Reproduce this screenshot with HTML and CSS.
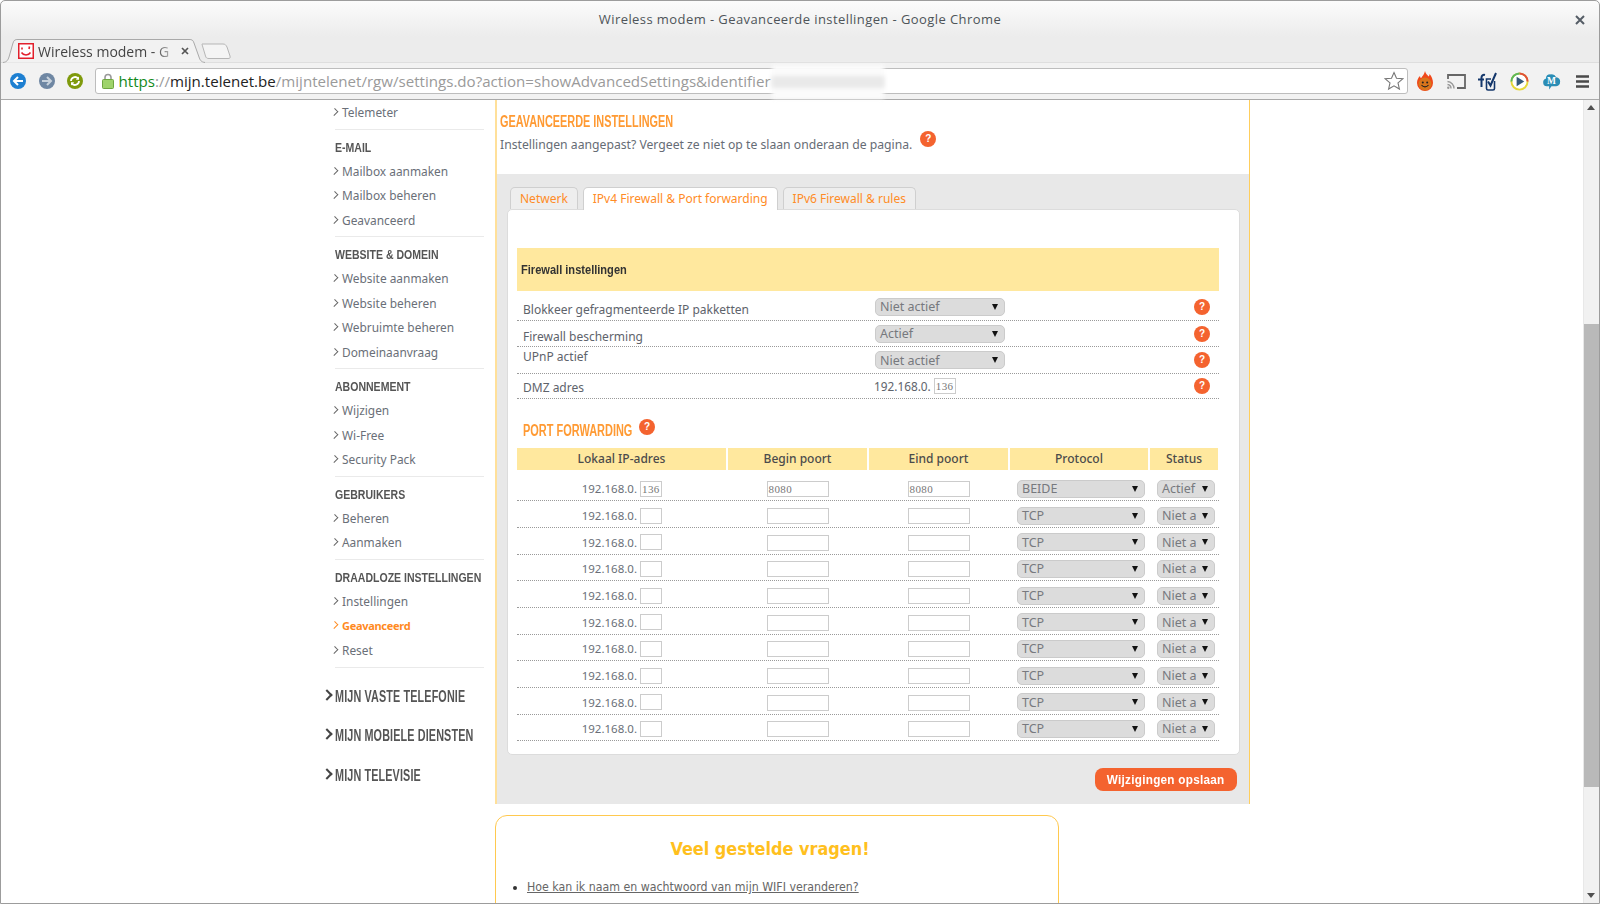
FILE: index.html
```html
<!DOCTYPE html>
<html lang="nl">
<head>
<meta charset="utf-8">
<title>Wireless modem - Geavanceerde instellingen</title>
<link rel="stylesheet" href="styles.css">
</head>
<body>
<div class="window">
  <header class="titlebar">
    <div class="title">Wireless modem - Geavanceerde instellingen - Google Chrome</div>
    <svg class="win-close" width="10" height="10" viewBox="0 0 10 10"><path d="M1 1l8 8M9 1L1 9" stroke="#555d66" stroke-width="2"/></svg>
  </header>
  <div class="tabstrip">
    <div class="btab">
      <svg class="btab-shape" width="202" height="24" viewBox="0 0 202 24"><path d="M0 23.500C4 23 5 21 6 18L10 4C11 1 12 .5 15 .5H186C189 .5 190 1 191 4L196 18C197 21 198 23 202 23.500" fill="#f2f2f2" stroke="#a9a9a9"/></svg>
      <svg class="favicon" width="16" height="16" viewBox="0 0 16 16"><rect x=".75" y=".75" width="14.500" height="14.500" fill="#fff" stroke="#e2202c" stroke-width="1.500"/><path d="M4 4.500v2M11.500 3.500l-.5 2.500" stroke="#e2202c" stroke-width="1.600"/><path d="M3.500 9.500c2 3.200 7 3.200 9 0" fill="none" stroke="#e2202c" stroke-width="1.500"/></svg>
      <span class="btab-text">Wireless modem - G</span>
      <svg class="btab-close" width="8" height="8" viewBox="0 0 8 8"><path d="M1 1l6 6M7 1L1 7" stroke="#555" stroke-width="1.700"/></svg>
    </div>
    <svg class="newtab" width="30" height="16" viewBox="0 0 30 16"><path d="M1 1H22C24 1 25 2 26 4L29 13C29.500 15 29 15.500 27 15.500H8C6 15.500 5 15 4.500 13L1.500 3C1 1.500 1 1 1 1Z" fill="#f4f4f4" stroke="#b5b5b5"/></svg>
  </div>
  <div class="toolbar">
    <svg class="navbtn" width="18" height="18" viewBox="0 0 18 18"><circle cx="9" cy="9" r="8" fill="#1d7fd1"/><path d="M14 9H5.500M9 5L5 9l4 4" fill="none" stroke="#fff" stroke-width="2"/></svg>
    <svg class="navbtn" width="18" height="18" viewBox="0 0 18 18"><circle cx="9" cy="9" r="8" fill="#6f87a3"/><path d="M4 9h8.500M9 5l4 4-4 4" fill="none" stroke="#c8d2dc" stroke-width="2"/></svg>
    <svg class="navbtn" width="18" height="18" viewBox="0 0 18 18"><circle cx="9" cy="9" r="8" fill="#7f9a0c"/><path d="M13 9a4 4 0 0 1-7 2.600M5 9a4 4 0 0 1 7-2.600" fill="none" stroke="#fff" stroke-width="1.800"/><path d="M13 4.500v3.200h-3.200zM5 13.500v-3.200h3.200z" fill="#fff"/></svg>
    <div class="omnibox">
      <svg class="lock" width="12" height="16" viewBox="0 0 12 16"><path d="M3 7V4.500a3 3 0 0 1 6 0V7" fill="none" stroke="#9a9a9a" stroke-width="1.600"/><rect x=".5" y="6.500" width="11" height="9" rx="1" fill="#9ed36a" stroke="#6ea640"/></svg>
      <div class="url"><span class="u-https">https</span><span class="u-path">://</span><span class="u-host">mijn.telenet.be</span><span class="u-path">/mijntelenet/rgw/settings.do?action=showAdvancedSettings&amp;identifier</span></div>
      <div class="smear"></div>
      <svg class="star" width="20" height="20" viewBox="0 0 20 20"><path d="M10 1.500l2.500 5.700 6.200.6-4.700 4.100 1.400 6.100L10 14.800 4.600 18l1.400-6.100-4.700-4.100 6.200-.6z" fill="#fff" stroke="#777" stroke-width="1.100"/></svg>
    </div>
    <div class="ext-icons">
      <svg width="16" height="20" viewBox="0 0 16 20"><path d="M8 0c.5 3 2.500 3.500 3.500 5.500.8-.6 1-1.500 1-2.500 2 2 3.500 5.500 3.500 9a8 8 0 0 1-16 0c0-3 1.300-5.500 3-7 0 1 .3 1.800 1 2.300C5.500 5 7.500 3 8 0z" fill="#f0481a"/><circle cx="8" cy="13" r="6.500" fill="#d9751c"/><circle cx="5.800" cy="11.500" r="1" fill="#222"/><circle cx="10.200" cy="11.500" r="1" fill="#222"/><path d="M4.500 14c2 2.500 5 2.500 7 0" fill="none" stroke="#222" stroke-width="1.100"/></svg>
      <svg width="19" height="15" viewBox="0 0 19 15"><path d="M1 5V1h17v13H10" fill="none" stroke="#666" stroke-width="1.800"/><path d="M.5 7.500a7 7 0 0 1 6.500 7M.5 10.500a4 4 0 0 1 3.500 4" fill="none" stroke="#999" stroke-width="1.400"/><circle cx="1.300" cy="13.700" r="1.200" fill="#999"/></svg>
      <svg width="19" height="19" viewBox="0 0 19 19"><path d="M3.500 15V5.500C3.500 3.500 5 2.500 7 3M0 7.500h6" fill="none" stroke="#14376b" stroke-width="2"/><path d="M13 7H8.500v9.500c0 1 .5 1.500 1.500 1.500h5c1 0 1.500-.5 1.500-1.500V9" fill="none" stroke="#14376b" stroke-width="1.600"/><path d="M10 9.500l2.500 4L18 1" fill="none" stroke="#14376b" stroke-width="2"/></svg>
      <svg width="19" height="19" viewBox="0 0 20 20"><circle cx="10" cy="10" r="8.500" fill="#fff" stroke="#e6d83a" stroke-width="2"/><path d="M10 1.500a8.500 8.500 0 0 1 8.500 8.500" fill="none" stroke="#e0503a" stroke-width="2"/><path d="M1.500 10A8.500 8.500 0 0 1 10 1.500" fill="none" stroke="#5cb85c" stroke-width="2"/><path d="M7 5l8 5-8 5z" fill="#34587a"/></svg>
      <svg width="19" height="19" viewBox="0 0 20 20"><path d="M5 15a4 4 0 0 1-1-7.800 5 5 0 0 1 5-4.700 5.500 5.500 0 0 1 6 3 4.800 4.800 0 0 1 0 9.500h-5l-2.500 3.500v-3.500z" fill="#2b8db5"/><text class="ext-m" x="10" y="12.500">M</text></svg>
      <svg width="13" height="13" viewBox="0 0 13 13"><path d="M0 1.500h13M0 6.500h13M0 11.500h13" stroke="#4a4a4a" stroke-width="2.400"/></svg>
    </div>
  </div>
  <div class="viewport">
    <div class="page">
      <nav class="sidebar">
        <div class="group">
          <a class="item">Telemeter</a>
        </div>
        <div class="group">
          <h4>E-MAIL</h4>
          <a class="item">Mailbox aanmaken</a>
          <a class="item">Mailbox beheren</a>
          <a class="item">Geavanceerd</a>
        </div>
        <div class="group">
          <h4>WEBSITE &amp; DOMEIN</h4>
          <a class="item">Website aanmaken</a>
          <a class="item">Website beheren</a>
          <a class="item">Webruimte beheren</a>
          <a class="item">Domeinaanvraag</a>
        </div>
        <div class="group">
          <h4>ABONNEMENT</h4>
          <a class="item">Wijzigen</a>
          <a class="item">Wi-Free</a>
          <a class="item">Security Pack</a>
        </div>
        <div class="group">
          <h4>GEBRUIKERS</h4>
          <a class="item">Beheren</a>
          <a class="item">Aanmaken</a>
        </div>
        <div class="group tall">
          <h4>DRAADLOZE INSTELLINGEN</h4>
          <a class="item">Instellingen</a>
          <a class="item active">Geavanceerd</a>
          <a class="item">Reset</a>
        </div>
        <div class="biglinks">
          <a class="big"><span>MIJN VASTE TELEFONIE</span></a>
          <a class="big"><span>MIJN MOBIELE DIENSTEN</span></a>
          <a class="big"><span>MIJN TELEVISIE</span></a>
        </div>
      </nav>
      <main class="main">
        <section class="settings">
          <div class="intro">
            <h2>GEAVANCEERDE INSTELLINGEN</h2>
            <p>Instellingen aangepast? Vergeet ze niet op te slaan onderaan de pagina.<span class="help help-raised">?</span></p>
          </div>
          <div class="panel">
            <div class="tabs">
              <a class="tab">Netwerk</a>
              <a class="tab on">IPv4 Firewall &amp; Port forwarding</a>
              <a class="tab">IPv6 Firewall &amp; rules</a>
            </div>
            <div class="card">
              <div class="banner"><span>Firewall instellingen</span></div>
              <div class="frow first"><span class="flabel">Blokkeer gefragmenteerde IP pakketten</span><div class="fctl"><span class="sel w130">Niet actief</span></div><span class="help">?</span></div>
              <div class="frow"><span class="flabel">Firewall bescherming</span><div class="fctl"><span class="sel w130">Actief</span></div><span class="help">?</span></div>
              <div class="frow third"><span class="flabel up">UPnP actief</span><div class="fctl"><span class="sel w130">Niet actief</span></div><span class="help">?</span></div>
              <div class="frow short"><span class="flabel">DMZ adres</span><div class="fctl ip">192.168.0. <span class="inp ip3">136</span></div><span class="help">?</span></div>
              <h3><span class="h3-text">PORT FORWARDING</span><span class="help">?</span></h3>
              <div class="pf-head"><div>Lokaal IP-adres</div><div>Begin poort</div><div>Eind poort</div><div>Protocol</div><div>Status</div></div>
              <div class="pf-row"><div class="c-ip">192.168.0. <span class="inp ip3">136</span></div><div class="c-in"><span class="inp port">8080</span></div><div class="c-in"><span class="inp port">8080</span></div><div class="c-sel"><span class="sel w128">BEIDE</span></div><div class="c-st"><span class="sel w58">Actief</span></div></div>
              <div class="pf-row"><div class="c-ip">192.168.0. <span class="inp ip3"></span></div><div class="c-in"><span class="inp port"></span></div><div class="c-in"><span class="inp port"></span></div><div class="c-sel"><span class="sel w128">TCP</span></div><div class="c-st"><span class="sel w58">Niet a</span></div></div>
              <div class="pf-row"><div class="c-ip">192.168.0. <span class="inp ip3"></span></div><div class="c-in"><span class="inp port"></span></div><div class="c-in"><span class="inp port"></span></div><div class="c-sel"><span class="sel w128">TCP</span></div><div class="c-st"><span class="sel w58">Niet a</span></div></div>
              <div class="pf-row"><div class="c-ip">192.168.0. <span class="inp ip3"></span></div><div class="c-in"><span class="inp port"></span></div><div class="c-in"><span class="inp port"></span></div><div class="c-sel"><span class="sel w128">TCP</span></div><div class="c-st"><span class="sel w58">Niet a</span></div></div>
              <div class="pf-row"><div class="c-ip">192.168.0. <span class="inp ip3"></span></div><div class="c-in"><span class="inp port"></span></div><div class="c-in"><span class="inp port"></span></div><div class="c-sel"><span class="sel w128">TCP</span></div><div class="c-st"><span class="sel w58">Niet a</span></div></div>
              <div class="pf-row"><div class="c-ip">192.168.0. <span class="inp ip3"></span></div><div class="c-in"><span class="inp port"></span></div><div class="c-in"><span class="inp port"></span></div><div class="c-sel"><span class="sel w128">TCP</span></div><div class="c-st"><span class="sel w58">Niet a</span></div></div>
              <div class="pf-row"><div class="c-ip">192.168.0. <span class="inp ip3"></span></div><div class="c-in"><span class="inp port"></span></div><div class="c-in"><span class="inp port"></span></div><div class="c-sel"><span class="sel w128">TCP</span></div><div class="c-st"><span class="sel w58">Niet a</span></div></div>
              <div class="pf-row"><div class="c-ip">192.168.0. <span class="inp ip3"></span></div><div class="c-in"><span class="inp port"></span></div><div class="c-in"><span class="inp port"></span></div><div class="c-sel"><span class="sel w128">TCP</span></div><div class="c-st"><span class="sel w58">Niet a</span></div></div>
              <div class="pf-row"><div class="c-ip">192.168.0. <span class="inp ip3"></span></div><div class="c-in"><span class="inp port"></span></div><div class="c-in"><span class="inp port"></span></div><div class="c-sel"><span class="sel w128">TCP</span></div><div class="c-st"><span class="sel w58">Niet a</span></div></div>
              <div class="pf-row"><div class="c-ip">192.168.0. <span class="inp ip3"></span></div><div class="c-in"><span class="inp port"></span></div><div class="c-in"><span class="inp port"></span></div><div class="c-sel"><span class="sel w128">TCP</span></div><div class="c-st"><span class="sel w58">Niet a</span></div></div>
            </div>
            <div class="actions"><a class="save"><span>Wijzigingen opslaan</span></a></div>
          </div>
        </section>
        <section class="faq">
          <h3>Veel gestelde vragen!</h3>
          <ul><li><a>Hoe kan ik naam en wachtwoord van mijn WIFI veranderen?</a></li></ul>
        </section>
      </main>
      <div class="scrollbar">
        <div class="sb-up"></div>
        <div class="sb-track"><div class="sb-thumb"></div></div>
        <div class="sb-down"></div>
      </div>
    </div>
  </div>
</div>
</body>
</html>
```

FILE: styles.css
```css
* { box-sizing: border-box; }
html, body { margin: 0; height: 100%; overflow: hidden; background: #fff; }
body { font-family: "Noto Sans", sans-serif; color: #666; }
.window {
  width: 1600px; height: 904px; display: flex; flex-direction: column;
  border: 1px solid #9c9c9c; border-radius: 5px 5px 0 0; overflow: hidden;
  background: linear-gradient(#fbfbfb 0, #ececec 36px);
}
.titlebar { height: 36px; display: flex; align-items: center; justify-content: center; position: relative; flex: none; }
.title { font-family: "Open Sans", sans-serif; font-size: 13px; letter-spacing: .42px; color: #4e5459; }
.win-close { position: absolute; right: 14px; top: 14px; }
.tabstrip { height: 25px; flex: none; display: flex; align-items: flex-end; padding-left: 2px; position: relative; z-index: 3; }
.btab { width: 202px; height: 24px; margin-bottom: -1px; display: flex; align-items: center; gap: 4px; padding: 0 0 0 15px; position: relative; }
.btab-shape { position: absolute; left: 0; top: 0; }
.btab-text { position: relative; width: 134px; font-family: "Open Sans", sans-serif; font-size: 14px; color: #444; white-space: nowrap; -webkit-mask-image: linear-gradient(90deg, #000 88%, rgba(0,0,0,.25)); mask-image: linear-gradient(90deg, #000 88%, rgba(0,0,0,.25)); }
.btab-close { margin-left: 5px; flex: none; position: relative; }
.favicon { flex: none; position: relative; }
.newtab { flex: none; margin: 0 0 3px -4px; }
.toolbar { height: 38px; flex: none; display: flex; align-items: center; background: #f2f2f2; border-top: 1px solid #dedede; border-bottom: 1px solid #a9a9a9; padding: 0 0 0 8px; gap: 10.5px; position: relative; z-index: 2; }
.navbtn { flex: none; }
.omnibox { width: 1313px; height: 26px; flex: none; background: #fff; border: 1px solid #bdbdbd; border-radius: 3px; display: flex; align-items: center; padding: 0 3px 0 6px; gap: 5px; position: relative; }
.lock { flex: none; }
.url { font-family: "Open Sans", sans-serif; font-size: 15.1px; flex: 1; white-space: nowrap; }
.u-https { color: #12891a; }
.u-path { color: #9a9a9a; }
.u-host { color: #222; }
.smear { position: absolute; left: 676px; top: -4px; width: 112px; height: 34px; filter: blur(2px); background: repeating-linear-gradient(90deg, #dcdcdc 0 2px, #f2f2f2 2px 5px) center / 100% 12px no-repeat, #fbfbfb; }
.star { flex: none; }
.ext-icons { display: grid; grid-auto-flow: column; grid-auto-columns: 31.6px; justify-items: center; align-items: center; margin-left: -9px; flex: none; }
.ext-m { font-family: "Liberation Serif", serif; font-size: 10px; font-weight: 700; fill: #fff; text-anchor: middle; }
.viewport { flex: 1; min-height: 0; background: #fff; overflow: hidden; }
.page { display: flex; height: 100%; padding-left: 333px; position: relative; }
.sidebar { width: 161px; flex: none; padding-right: 11px; }
.group { border-bottom: 1px solid #eaeaea; padding: 9px 0 4px; margin-left: 1px; }
.group:first-child { padding-top: 0; }
.group.tall { padding-bottom: 5px; }
.group h4 { margin: 0; height: 20px; line-height: 18px; font-family: "Liberation Sans", sans-serif; font-size: 13.5px; font-weight: 700; color: #555; white-space: nowrap; transform: scaleX(.78); transform-origin: left center; }
.item { display: flex; align-items: center; height: 24.5px; color: #6a6f78; font-size: 11.9px; white-space: nowrap; }
.item::before { content: ""; width: 4px; height: 5px; border: solid #666; border-width: 1px 1px 0 0; transform: rotate(45deg); margin-right: 5px; margin-left: -3px; flex: none; }
.item.active { color: #ff8a1f; font-weight: 700; font-size: 11px; letter-spacing: -.3px; }
.item.active::before { border-color: #ff8a1f; }
.biglinks { padding-top: 9px; }
.big { display: flex; align-items: center; height: 39.5px; margin-left: -11px; color: #555; white-space: nowrap; }
.big span { font-family: "Liberation Sans", sans-serif; font-weight: 700; font-size: 16px; letter-spacing: .2px; transform: scaleX(.675); transform-origin: left center; }
.big::before { content: ""; width: 6px; height: 6px; border: solid #444; border-width: 2px 2px 0 0; transform: rotate(45deg); margin: -4px 4px 0 0; flex: none; }
.main { width: 755px; flex: none; display: flex; flex-direction: column; }
.settings { border-left: 2px solid #ffe09a; border-right: 1px solid #ffce5c; height: 704px; flex: none; display: flex; flex-direction: column; }
.intro { height: 74px; padding: 12.5px 0 0 3px; }
.intro h2 { margin: 0; height: 18px; line-height: 18px; font-family: "Liberation Sans", sans-serif; font-size: 16px; font-weight: 700; color: #ff9a33; white-space: nowrap; transform: scaleX(.68); transform-origin: left center; }
.intro p { margin: 4.5px 0 0; line-height: 20px; font-size: 12.2px; color: #666c75; white-space: nowrap; }
.help { display: inline-flex; width: 16px; height: 16px; flex: none; border-radius: 50%; background: #f4632f; color: #fff; font: 700 10px/16px "Liberation Sans", sans-serif; align-items: center; justify-content: center; }
.help-raised { margin-left: 8px; position: relative; top: -7px; }
.panel { flex: 1; background: #e8e8e8; padding: 13px 9px 0 10px; display: flex; flex-direction: column; }
.tabs { display: flex; padding-left: 3px; gap: 5px; height: 22px; flex: none; }
.tab { height: 22px; padding: 0 9px; line-height: 21.5px; font-size: 12px; color: #ff8c26; background: #eeeeee; border: 1px solid #cfcfcf; border-bottom: 0; border-radius: 5px 5px 0 0; white-space: nowrap; }
.tab.on { background: #fff; height: 23px; position: relative; z-index: 1; }
.card { background: #fff; border: 1px solid #dcdcdc; border-radius: 5px; height: 546px; flex: none; padding: 38px 9px 0; }
.banner { height: 43px; background: #ffe89e; display: flex; align-items: center; padding-left: 4px; width: 702px; }
.banner span { font-family: "Liberation Sans", sans-serif; font-weight: 700; font-size: 13.5px; color: #333; white-space: nowrap; transform: scaleX(.82); transform-origin: left center; }
.frow { height: 26.3px; display: flex; align-items: center; border-bottom: 1px dotted #9a9a9a; width: 702px; padding-left: 6px; padding-right: 9px; color: #5e636b; font-size: 12px; }
.frow.first { height: 30px; padding-top: 2px; }
.frow.third { padding-top: 1px; }
.flabel { width: 352px; flex: none; position: relative; top: 3px; }
.frow.first .flabel { top: 3px; }
.flabel.up { top: -4px; }
.frow.short .flabel { top: 2px; }
.frow.short { height: 25px; }
.fctl { flex: 1; display: flex; align-items: center; gap: 3px; }
.fctl.ip { white-space: nowrap; margin-left: -1px; font-size: 11.8px; }
.sel { display: inline-flex; align-items: center; justify-content: space-between; height: 18px; padding: 0 6px 0 4px; background: #dcdcdc; border: 1px solid #cbcbcb; border-radius: 5px; font-size: 12.5px; color: #77797e; white-space: nowrap; }
.sel::after { content: ""; border: solid transparent; border-width: 6px 3.5px 0; border-top-color: #111; }
.w130 { width: 130px; }
.w128 { width: 128px; }
.w58 { width: 58px; }
.inp { display: inline-block; height: 16px; background: #fff; border: 1px solid #cccccc; font: 11px/14px "Liberation Serif", serif; color: #777; padding-left: 1px; letter-spacing: .4px; text-align: left; vertical-align: middle; }
.ip3 { width: 22px; }
.port { width: 62px; }
.card h3 { margin: 0; height: 49px; padding: 22px 0 0 6px; display: flex; align-items: flex-start; gap: 7px; white-space: nowrap; line-height: 19px; }
.h3-text { width: 109px; flex: none; font-family: "Liberation Sans", sans-serif; font-size: 16px; font-weight: 700; color: #ff9a33; transform: scaleX(.685); transform-origin: left center; }
.card h3 .help { margin-top: -2px; }
.pf-head, .pf-row { display: grid; grid-template-columns: 209px 139px 139px 138px 68px; column-gap: 2px; width: 702px; }
.pf-head { height: 22px; margin-bottom: 5px; }
.pf-head div { background: #ffe89e; text-align: center; line-height: 22px; font-size: 12px; font-weight: 500; color: #4b4b4b; }
.pf-row { height: 26.67px; padding-top: 3px; align-items: center; border-bottom: 1px dotted #9a9a9a; font-size: 11.5px; color: #6a6f78; }
.c-ip { display: flex; justify-content: flex-end; align-items: center; gap: 3px; padding-right: 64px; white-space: nowrap; }
.c-in { text-align: center; }
.c-sel { padding-left: 7px; }
.c-st { padding-left: 7px; }
.actions { display: flex; justify-content: flex-end; padding: 13px 3px 0 0; }
.save { width: 142px; height: 23px; display: flex; align-items: center; justify-content: center; background: #f4632f; border-radius: 8px; color: #fff; }
.save span { font-family: "Liberation Sans", sans-serif; font-weight: 700; font-size: 13.5px; letter-spacing: .3px; white-space: nowrap; transform: scaleX(.87); }
.faq { width: 564px; height: 200px; margin-top: 11px; border: 1px solid #ffc94f; border-radius: 12px; flex: none; font-family: "DejaVu Sans Condensed", "DejaVu Sans", sans-serif; }
.faq h3 { margin: 0; padding: 21px 14px 0 0; line-height: 24px; font-size: 17.9px; font-weight: 700; text-align: center; color: #ffc01e; }
.faq ul { margin: 19px 0 0; padding-left: 31px; font-size: 12.25px; color: #333; }
.faq a { color: #666; text-decoration: underline; }
.scrollbar { position: absolute; right: 0; top: 0; bottom: 0; width: 16px; background: #f1f1f1; border-left: 1px solid #e8e8e8; display: flex; flex-direction: column; }
.sb-up, .sb-down { height: 15px; flex: none; position: relative; }
.sb-up::after, .sb-down::after { content: ""; position: absolute; left: 3px; top: 5px; border: solid transparent; border-width: 0 4px 5px; border-bottom-color: #505050; }
.sb-down::after { border-width: 5px 4px 0; border-top-color: #505050; border-bottom-color: transparent; }
.sb-track { flex: 1; padding-top: 209px; }
.sb-thumb { height: 463px; background: #b9b9b9; }
```
